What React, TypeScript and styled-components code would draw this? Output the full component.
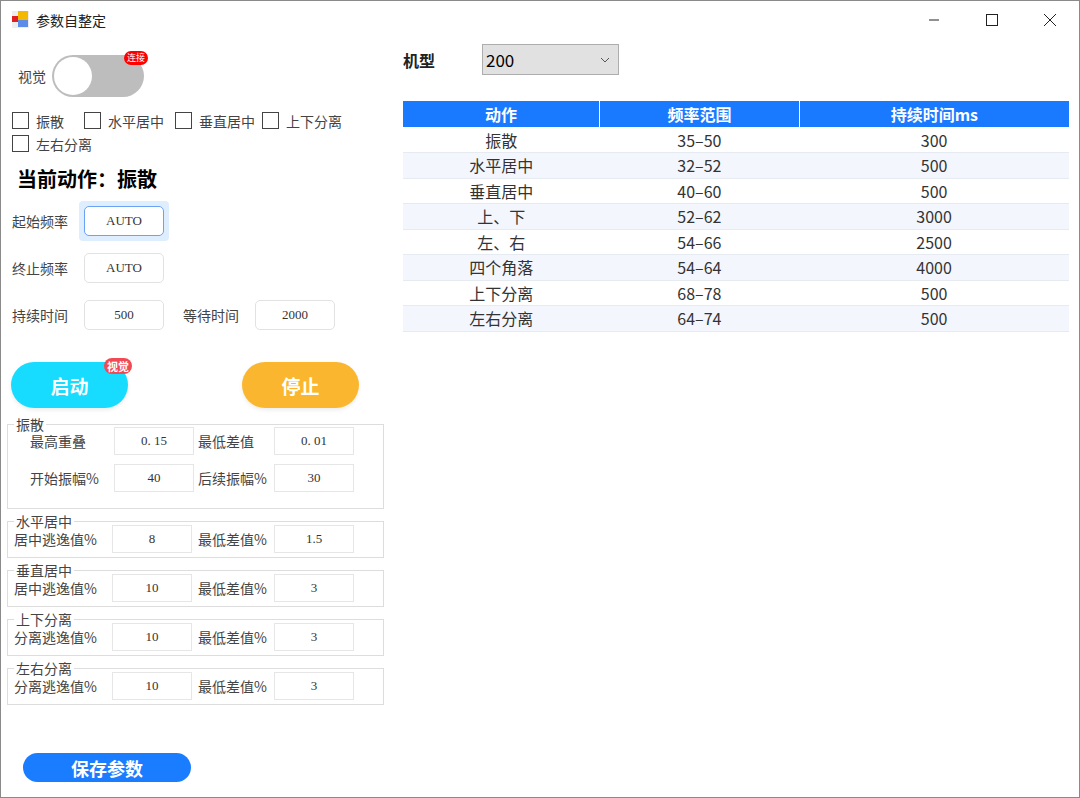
import React from "react";
import styled, { createGlobalStyle } from "styled-components";

const G = createGlobalStyle`
  html,body{margin:0;padding:0;background:#fff;}
  body{font-family:"Noto Sans CJK SC","Noto Sans",sans-serif;color:#222;}
  *{box-sizing:border-box;}
`;
const Win = styled.div`width:1080px;height:798px;border:1px solid #8a8a8a;display:flex;flex-direction:column;overflow:hidden;`;
const TitleBar = styled.div`height:37px;display:flex;align-items:center;padding-left:11px;font-size:14px;flex-shrink:0;`;
const TitleText = styled.span`margin-left:7px;flex:1;`;
const Ctrl = styled.div`width:58px;height:37px;display:flex;align-items:center;justify-content:center;`;
const Body = styled.div`display:flex;flex:1;`;
const Left = styled.div`width:392px;padding:0 0 0 5px;display:flex;flex-direction:column;`;
const Right = styled.div`flex:1;padding:6px 10px 0 11px;`;
const ToggleRow = styled.div`display:flex;align-items:center;margin:16px 0 0 12px;height:44px;`;
const SerifLabel = styled.span<{ w?: number }>`font-size:14px;color:#444;${p => p.w ? `width:${p.w}px;` : ""}white-space:nowrap;`;
const Toggle = styled.div`position:relative;width:92px;height:42px;border-radius:21px;background:#bdbdbd;margin-left:6px;`;
const Knob = styled.div`position:absolute;left:2px;top:2px;width:38px;height:38px;border-radius:50%;background:#fff;`;
const Badge = styled.span<{ bg: string }>`position:absolute;background:${p => p.bg};color:#fff;font-size:10px;line-height:14px;padding:2px 4px;border-radius:10px;`;
const Checks = styled.div`display:flex;flex-wrap:wrap;width:350px;margin:14px 0 0 6px;row-gap:6px;`;
const Check = styled.label<{ w: number }>`display:flex;align-items:center;width:${p => p.w}px;font-size:14px;color:#444;height:17px;`;
const Box = styled.span`width:17px;height:17px;border:1px solid #444;margin-right:7px;background:#fff;`;
const Heading = styled.div`font-size:20px;font-weight:700;margin:12px 0 0 11px;color:#000;`;
const FormRow = styled.div`display:flex;align-items:center;height:47px;margin-left:6px;`;
const Focus = styled.div<{ on?: boolean }>`padding:5px;border-radius:4px;margin-left:2px;background:${p => p.on ? "#dfeeff" : "transparent"};`;
const Inp = styled.div<{ focus?: boolean; w?: number }>`width:${p => p.w ?? 80}px;height:30px;border:1px solid ${p => p.focus ? "#6aa2f5" : "#e2e2e2"};border-radius:5px;display:flex;align-items:center;justify-content:center;font-size:13px;color:#333;font-family:"Liberation Serif","Noto Sans CJK SC",serif;background:#fff;`;
const Btns = styled.div`display:flex;justify-content:space-between;width:348px;margin:24px 0 0 5px;`;
const Pill = styled.div<{ bg: string }>`position:relative;width:117px;height:46px;border-radius:23px;background:${p => p.bg};color:#fff;font-weight:700;font-size:19px;display:flex;align-items:center;justify-content:center;box-shadow:0 2px 4px rgba(0,0,0,.08);`;
const Field = styled.fieldset`margin:6px 0 0 1px;width:377px;border:1px solid #ddd;padding:0 0 2px 6px;&+&{margin-top:6px;}`;
const Legend = styled.legend`font-size:14px;color:#444;padding:0 2px;margin-left:0;line-height:12px;`;
const FRow = styled.div<{ h: number }>`display:flex;align-items:center;height:${p => p.h}px;`;
const Small = styled(Inp)`height:28px;border-radius:0;border-color:#e6e6e6;`;
const Save = styled.div`width:168px;height:29px;border-radius:15px;background:#1a7dff;color:#fff;font-weight:700;font-size:18px;display:flex;align-items:center;justify-content:center;margin:auto 0 15px 17px;`;
const TopRow = styled.div`display:flex;align-items:center;`;
const Bold = styled.span`font-weight:700;font-size:16px;width:79px;`;
const Select = styled.div`width:137px;height:31px;background:#e1e1e1;border:1px solid #adadad;display:flex;align-items:center;justify-content:space-between;padding:0 8px 0 3px;font-size:17px;color:#000;`;
const Table = styled.table`margin-top:26px;width:666px;border-collapse:collapse;font-size:16px;`;
const Th = styled.th`background:#1a7aff;color:#fff;height:26px;font-weight:700;border-left:1px solid #fff;padding:0;&:first-child{border-left:none;}`;
const Tr = styled.tr<{ alt: boolean }>`background:${p => p.alt ? "#f3f7fd" : "#fff"};border-bottom:1px solid #e6ebf2;`;
const Td = styled.td`text-align:center;height:25.5px;padding:0;color:#333;line-height:20px;`;

const rows = [["振散","35–50","300"],["水平居中","32–52","500"],["垂直居中","40–60","500"],["上、下","52–62","3000"],["左、右","54–66","2500"],["四个角落","54–64","4000"],["上下分离","68–78","500"],["左右分离","64–74","500"]];
const groups = [["水平居中","居中逃逸值%","8","1.5"],["垂直居中","居中逃逸值%","10","3"],["上下分离","分离逃逸值%","10","3"],["左右分离","分离逃逸值%","10","3"]];

export default function App() {
  return (<><G />
    <Win>
      <TitleBar>
        <svg width="17" height="17" viewBox="0 0 17 17"><rect x="0" y="0" width="17" height="17" fill="#eee"/><rect x="6" y="0" width="10" height="9" fill="#f5b800"/><rect x="6" y="9" width="10" height="7" fill="#5b8de8"/><rect x="0" y="5" width="6" height="6" fill="#e02020"/></svg>
        <TitleText>参数自整定</TitleText>
        <Ctrl><svg width="12" height="12"><line x1="1" y1="6" x2="11" y2="6" stroke="#222"/></svg></Ctrl>
        <Ctrl><svg width="12" height="12"><rect x="0.5" y="0.5" width="11" height="11" fill="none" stroke="#222"/></svg></Ctrl>
        <Ctrl><svg width="12" height="12"><path d="M0 0L12 12M12 0L0 12" stroke="#222"/></svg></Ctrl>
      </TitleBar>
      <Body>
        <Left>
          <ToggleRow><SerifLabel>视觉</SerifLabel><Toggle><Knob /><Badge bg="#f00" style={{ right: -4, top: -4, fontSize: 9, padding: "0 3px" }}>连接</Badge></Toggle></ToggleRow>
          <Checks>
            <Check w={72}><Box />振散</Check>
            <Check w={91}><Box />水平居中</Check>
            <Check w={87}><Box />垂直居中</Check>
            <Check w={90}><Box />上下分离</Check>
            <Check w={100}><Box />左右分离</Check>
          </Checks>
          <Heading>当前动作：振散</Heading>
          <FormRow style={{ marginTop: 4 }}><SerifLabel w={65}>起始频率</SerifLabel><Focus on><Inp focus>AUTO</Inp></Focus></FormRow>
          <FormRow><SerifLabel w={65}>终止频率</SerifLabel><Focus><Inp>AUTO</Inp></Focus></FormRow>
          <FormRow><SerifLabel w={65}>持续时间</SerifLabel><Focus><Inp>500</Inp></Focus><SerifLabel w={72} style={{ marginLeft: 14 }}>等待时间</SerifLabel><Inp>2000</Inp></FormRow>
          <Btns>
            <Pill bg="#17dcff">启动<Badge bg="#f04a55" style={{ right: -4, top: -4, fontSize: 11, padding: "1px 3px" }}>视觉</Badge></Pill>
            <Pill bg="#fbb62f">停止</Pill>
          </Btns>
          <Field style={{ marginTop: 10 }}>
            <Legend>振散</Legend>
            <FRow h={34} style={{ marginTop: -6 }}><SerifLabel w={100} style={{ paddingLeft: 16 }}>最高重叠</SerifLabel><Small>0. 15</Small><SerifLabel w={80} style={{ paddingLeft: 4 }}>最低差值</SerifLabel><Small>0. 01</Small></FRow>
            <FRow h={40} style={{ marginBottom: 8 }}><SerifLabel w={100} style={{ paddingLeft: 16 }}>开始振幅%</SerifLabel><Small>40</Small><SerifLabel w={80} style={{ paddingLeft: 4 }}>后续振幅%</SerifLabel><Small>30</Small></FRow>
          </Field>
          {groups.map(g => (
            <Field key={g[0]}>
              <Legend>{g[0]}</Legend>
              <FRow h={32} style={{ marginTop: -4 }}><SerifLabel w={98}>{g[1]}</SerifLabel><Small>{g[2]}</Small><SerifLabel w={82} style={{ paddingLeft: 6 }}>最低差值%</SerifLabel><Small>{g[3]}</Small></FRow>
            </Field>
          ))}
          <Save>保存参数</Save>
        </Left>
        <Right>
          <TopRow><Bold>机型</Bold><Select>200<svg width="10" height="6"><path d="M1 1l4 4 4-4" fill="none" stroke="#555"/></svg></Select></TopRow>
          <Table>
            <thead><tr><Th>动作</Th><Th>频率范围</Th><Th>持续时间ms</Th></tr></thead>
            <tbody>{rows.map((r, i) => <Tr key={i} alt={i % 2 === 1}>{r.map((c, j) => <Td key={j}>{c}</Td>)}</Tr>)}</tbody>
          </Table>
        </Right>
      </Body>
    </Win></>);
}
